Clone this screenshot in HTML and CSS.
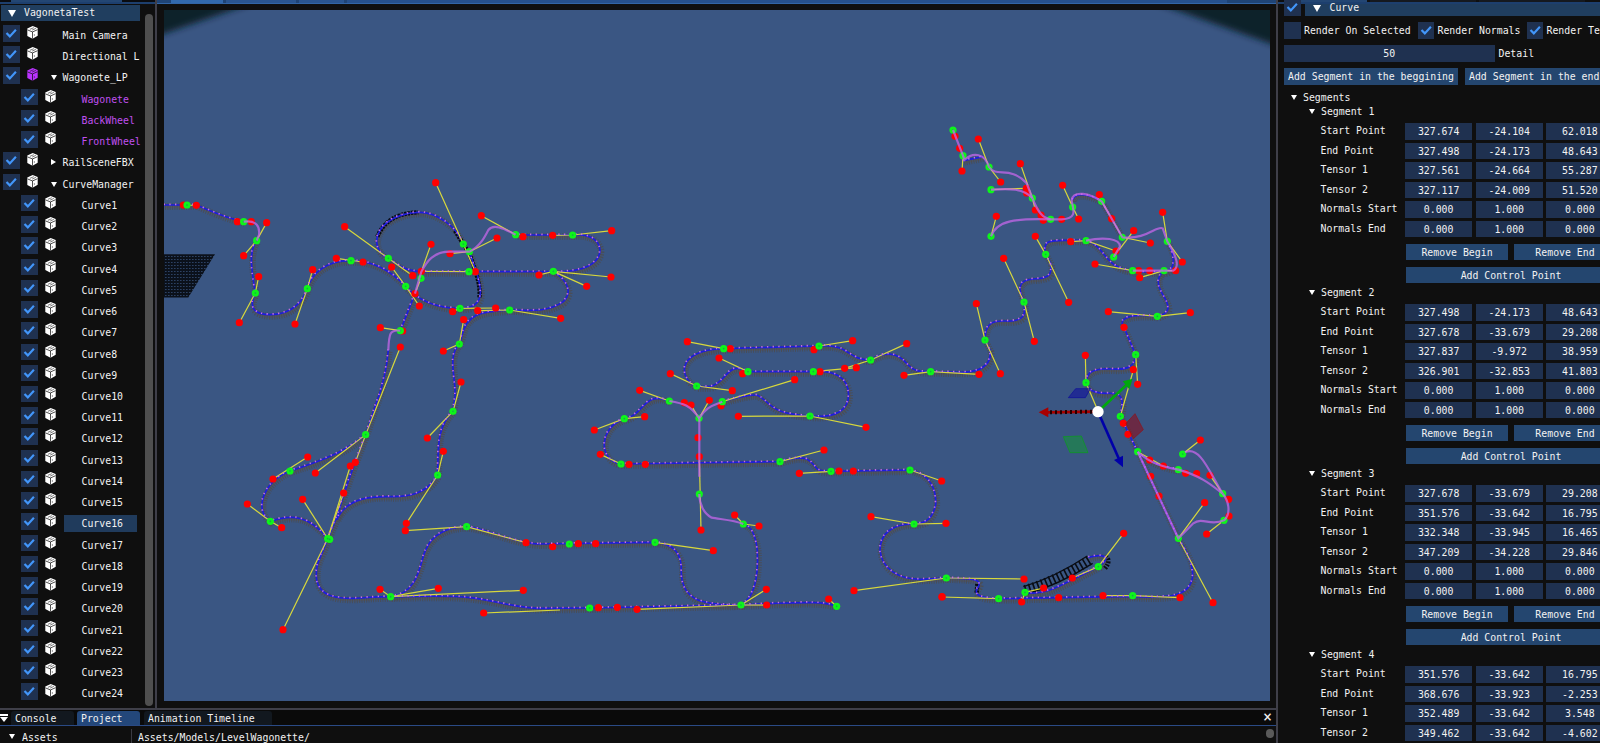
FILE: index.html
```
<!DOCTYPE html>
<html lang="en">
<head>
<meta charset="utf-8">
<title>VagonetaTest</title>
<link rel="stylesheet" href="styles.css">
</head>
<body>
<svg class="defs" width="0" height="0">
  <symbol id="check" viewBox="0 0 17 17"><path d="M3.6 8.2 L7 11.7 L13.3 4.9" fill="none" stroke="#4296fa" stroke-width="2.2"/></symbol>
  <symbol id="cube" viewBox="0 0 14 16">
    <path d="M7.2 1 L12.6 3.2 V11.6 L7 14.6 L1.4 11.8 V3.6 Z" fill="currentColor"/>
    <path d="M1.6 5.2 L7 7.4 L12.4 5 M7 7.4 V14.6" fill="none" stroke="#0f0f0f" stroke-width=".8"/>
    <path d="M4.2 4.6 L8.4 2.8 M6.6 5.4 L10.6 3.6" fill="none" stroke="#0f0f0f" stroke-width=".6"/>
    <path d="M9 10 V11.4" stroke="#0f0f0f" stroke-width=".7"/>
  </symbol>
</svg>
<div class="app">
  <div class="workspace">
    <div class="upper">
      <aside class="hierarchy">
        <div class="strip"><span class="strip-tab"></span></div>
        <div class="hier-body">
          <div class="hier-list">
            <div class="root"><i class="tri big"></i><span>VagonetaTest</span></div>
            <div id="tree"></div>
          </div>
          <div class="scrollbar"></div>
        </div>
      </aside>
      <main class="scene">
        <div class="scene-strip"><span></span><span></span><span></span><span></span></div>
        <svg class="view" width="1106" height="691" viewBox="164 10 1106 691">
          <defs>
            <pattern id="mesh" width="3" height="3" patternUnits="userSpaceOnUse"><rect width="3" height="3" fill="#0b111b"/><rect x="0" y="1" width="1.6" height="1" fill="#2c4163"/></pattern>
            <filter id="soft" x="-20%" y="-50%" width="140%" height="200%"><feGaussianBlur stdDeviation="3"/></filter>
          </defs>
          <rect x="164" y="10" width="1106" height="691" fill="#3a5683"/>
          <path d="M140 -10 H290 Q215 16 140 42 Z M1120 -10 Q1215 24 1300 54 V-10 Z" fill="#11232a" filter="url(#soft)"/>
          <g id="world"></g>
          <g transform="translate(850 360) scale(.33333)">
            <path d="M655 113 L677 86 H722 L706 113 Z" fill="#10109c" fill-opacity=".6" stroke="#0c0c9c" stroke-width="2"/>
            <path d="M855 161 L880 209 L850 236 L828 190 Z" fill="#8a0d1c" fill-opacity=".6" stroke="#8f1018" stroke-width="2"/>
            <path d="M640 230 L694 228 L714 278 L660 278 Z" fill="#0f9a30" fill-opacity=".5" stroke="#08a018" stroke-width="2"/>
            <path d="M744 155 L590 157" stroke="#a80000" stroke-width="8"/>
            <path d="M726 155 L598 157" stroke="#220000" stroke-width="12" stroke-dasharray="6 9"/>
            <path d="M566 157 L595 142 V172 Z" fill="#a80000"/>
            <path d="M744 155 L830 74" stroke="#00a80c" stroke-width="8"/>
            <path d="M848 56 L838 88 L818 64 Z" fill="#00a80c"/>
            <path d="M744 155 L806 295" stroke="#0000a8" stroke-width="8"/>
            <path d="M819 322 L792 300 L819 287 Z" fill="#0000a8"/>
            <circle cx="744" cy="155" r="17" fill="#fff"/>
          </g>
        </svg>
      </main>
    </div>
    <section class="bottom">
      <div class="tabs">
        <span class="menu"></span><span class="tab console">Console</span><span class="tab project">Project</span><span class="tab timeline">Animation Timeline</span><span class="close">×</span>
      </div>
      <div class="bottom-body">
        <span class="assets"><i class="tri"></i>Assets</span><span class="pathbar">Assets/Models/LevelWagonette/</span><span class="knob"></span>
      </div>
    </section>
  </div>
  <aside class="inspector">
    <div class="insp-strip"><span></span><span></span><span></span></div>
    <div class="comp-head"><svg class="box"><use href="#check"/></svg><div class="comp-bar"><i class="tri big"></i>Curve</div></div>
    <div class="opts"><svg class="box"></svg><span class="o1">Render On Selected</span><svg class="box"><use href="#check"/></svg><span class="o2">Render Normals</span><svg class="box"><use href="#check"/></svg><span>Render Te</span></div>
    <div class="detail"><span class="slider">50</span><span>Detail</span></div>
    <div class="adds"><span class="btn add1">Add Segment in the beggining</span><span class="btn add2">Add Segment in the end</span></div>
    <div class="segs-title"><i class="tri"></i>Segments</div>
    <div id="segments"></div>
  </aside>
</div>
<script src="main.js"></script>
</body>
</html>
```
FILE: styles.css
```
* { box-sizing: border-box; }
body { margin: 0; background: #0f0f0f; color: #f2f2f2; font: 9.85px/16px "DejaVu Sans Mono", "Liberation Mono", monospace; overflow: hidden; }
.defs { display: block; width: 0; height: 0; }
.app { display: flex; width: 1600px; height: 743px; overflow: hidden; white-space: nowrap; }
.workspace { width: 1276px; display: flex; flex-direction: column; }
.upper { display: flex; height: 708px; }
.hierarchy { width: 155px; }
.strip { height: 4px; background: #0a0c10; border-bottom: 2px solid #1d3f6e; padding-left: 11px; }
.strip-tab { display: block; width: 111px; height: 2px; background: #234673; }
.hier-body { display: flex; padding-top: 1px; }
.hier-list { width: 140px; margin-left: 1px; overflow: hidden; }
.root { display: flex; align-items: center; height: 16px; width: 139px; background: #203e5f; padding-left: 7px; margin-bottom: 4px; }
.root span { margin-left: 8px; }
.tri { flex: none; display: inline-block; width: 0; height: 0; border: 3px solid transparent; border-top: 5px solid #fff; border-bottom: 0; }
.tri.big { border-width: 7px 4px 0; }
.tri.right { border: 3px solid transparent; border-left: 5px solid #fff; border-right: 0; }
.tri.none { visibility: hidden; }
.node { display: flex; height: 21.24px; padding-left: 2px; }
.node.child { padding-left: 20px; }
.box { flex: none; display: block; width: 16.5px; height: 16.5px; background: #1f3150; }
.cube { flex: none; width: 13px; height: 15px; margin: 0 12px 0 6px; color: #fff; }
.node .tri { margin: 8px 6px 0 0; }
.node .tri.right { margin: 7px 7px 0 0; }
.purple { color: #c050f0; }
.cube.lit { color: #bb33ff; }
.label { flex: none; height: 16.5px; margin-top: 2px; line-height: 17px; }
.child .label { width: 73px; padding-left: 18px; }
.child .cube { margin-right: 7px; }
.selected { background: #203b5c; }
.scrollbar { width: 8px; height: 692px; margin: 9px 0 0 4px; border-radius: 4px; background: #4f4f4f; }
.scene { width: 1121px; border-left: 2px solid #3f3f49; }
.scene-strip { display: flex; height: 4px; background: #1f4476; border-bottom: 1px solid #3265a6; gap: 3px; padding-left: 14px; }
.scene-strip span { height: 3px; width: 52px; background: #3269ad; }
.scene-strip span + span { width: 70px; background: #2a5590; }
.scene-strip span + span + span { width: 45px; }
.scene-strip span:last-child { width: 880px; background: #26508c; }
.view { display: block; margin: 6px 0 0 7px; }
.bottom { height: 35px; border-top: 2px solid #3f3f49; background: #0f0f0f; }
.tabs { display: flex; height: 16px; border-bottom: 1px solid #2a4a85; background: #0a0a0a; padding-top: 1px; }
.menu { width: 8px; height: 8px; margin: 3px 3px 0 0; background: linear-gradient(#fff 2px, transparent 2px); position: relative; }
.menu::after { content: ""; position: absolute; left: 0; top: 3px; border: 4px solid transparent; border-top: 5px solid #fff; border-bottom: 0; }
.tab { height: 14px; border-radius: 3px 3px 0 0; background: #12181f; padding-left: 4px; line-height: 15px; }
.console { width: 63px; margin-right: 3px; }
.project { width: 63px; margin-right: 4px; background: #23477a; }
.timeline { width: 128px; }
.close { margin-left: auto; margin-right: 4px; font-size: 15px; line-height: 13px; }
.bottom-body { display: flex; padding-top: 3px; height: 17px; line-height: 18px; overflow: hidden; }
.assets { width: 131px; padding-left: 9px; height: 18px; }
.assets .tri { margin: 0 7px 2px 0; }
.pathbar { border-left: 1px solid #3a3a42; padding-left: 6px; }
.knob { width: 8px; height: 9px; border-radius: 4px; background: #5a5a5a; margin: 0 2px 0 auto; }
.inspector { width: 324px; height: 743px; overflow: hidden; border-left: 2px solid #3f3f49; flex: none; }
.insp-strip { display: flex; gap: 3px; height: 4px; border-bottom: 2px solid #1d3f6e; padding-left: 14px; }
.insp-strip span { width: 75px; height: 2px; background: #234673; }
.insp-strip span + span { width: 106px; background: #15191f; }
.comp-head { display: flex; height: 18px; }
.comp-head .box { margin: -5px 0 0 6px; }
.comp-bar { flex: 1; height: 12px; margin-left: 4px; background: #203e5f; display: flex; align-items: center; padding: 0 0 4px 8px; gap: 9px; }
.opts { display: flex; height: 23px; padding-left: 6px; line-height: 17px; }
.opts .box + span { margin-left: 3.5px; }
.o1 { width: 113.5px; }
.o2 { width: 89px; }
.opts span, .adds span { flex: none; }
.detail { display: flex; height: 23px; padding-left: 6px; gap: 4px; line-height: 17px; }
.slider { width: 210.5px; height: 16.5px; background: #1f3150; text-align: center; line-height: 17px; }
.btn { display: block; height: 16.5px; background: #24466f; text-align: center; line-height: 17px; }
.adds { display: flex; gap: 7px; padding-left: 6px; height: 21px; }
.add1 { width: 174px; }
.add2 { width: 140px; text-align: left; padding-left: 4px; }
.segs-title { height: 15px; padding-left: 12px; line-height: 17px; }
.segs-title .tri, .seg-title .tri { margin: 0 6px 1px 1px; }
.segment { height: 181px; padding-left: 30px; }
.seg-title { height: 19px; line-height: 16px; }
.row { display: flex; height: 19.55px; width: 400px; padding-left: 12.5px; gap: 3.3px; }
.name { width: 81.2px; line-height: 16px; }
.num { width: 67.3px; height: 16.6px; background: #1f3150; text-align: center; line-height: 17.5px; }
.pair { display: flex; width: 210px; gap: 6px; margin: 3.7px 0 6.5px 98px; }
.pair .btn { width: 102px; }
.wide { width: 210px; margin-left: 98px; }
.ties { fill: none; stroke: #4b4c50; stroke-width: 20; stroke-dasharray: 3 4; opacity: .85; }
.gap { fill: none; stroke: #4a5468; stroke-width: 9; }
.rail { fill: none; stroke: #1d1ddd; stroke-width: 5; }
.norm { fill: none; stroke: #c470e0; stroke-width: 5; stroke-dasharray: 4 13; }
.hot { fill: none; stroke: #c567ea; stroke-width: 6.5; }
.dark { fill: none; stroke: #070a12; stroke-width: 13; stroke-dasharray: 7 3; }
.tensor { fill: none; stroke: #d8d83c; stroke-width: 3.6; }
.ctl { fill: #f00; }
.pt { fill: #0df51a; }
.speck { fill: #17a64b; }
```
FILE: main.js
```
// ---- hierarchy ----
const nodes = [
  ['Main Camera'], ['Directional L'], ['Wagonete_LP', 'open', 'lit'],
  ['Wagonete', 'child', 'purple'], ['BackWheel', 'child', 'purple'], ['FrontWheel', 'child', 'purple'],
  ['RailSceneFBX', 'right'], ['CurveManager', 'open']
];
for (let i = 1; i <= 24; i++) nodes.push(['Curve' + i, 'child', i === 16 ? 'selected' : '']);
document.getElementById('tree').innerHTML = nodes.map(([t, k = '', c = '']) => {
  const child = k === 'child';
  const tri = child ? '' : `<i class="tri ${k === 'open' ? '' : k === 'right' ? 'right' : 'none'}"></i>`;
  return `<div class="node ${child ? 'child' : ''}"><svg class="box"><use href="#check"/></svg>` +
    `<svg class="cube ${c === 'lit' ? 'lit' : ''}"><use href="#cube"/></svg>${tri}<span class="label ${c === 'lit' ? '' : c}">${t}</span></div>`;
}).join('');

// ---- curve segments ----
const names = ['Start Point', 'End Point', 'Tensor 1', 'Tensor 2', 'Normals Start', 'Normals End'];
const normal = ['0.000', '1.000', '0.000'];
const segments = [
  ['327.674 -24.104 62.018', '327.498 -24.173 48.643', '327.561 -24.664 55.287', '327.117 -24.009 51.520'],
  ['327.498 -24.173 48.643', '327.678 -33.679 29.208', '327.837 -9.972 38.959', '326.901 -32.853 41.803'],
  ['327.678 -33.679 29.208', '351.576 -33.642 16.795', '332.348 -33.945 16.465', '347.209 -34.228 29.846'],
  ['351.576 -33.642 16.795', '368.676 -33.923 -2.253', '352.489 -33.642 3.548', '349.462 -33.642 -4.602']
];
document.getElementById('segments').innerHTML = segments.map((s, i) =>
  `<div class="segment"><div class="seg-title"><i class="tri"></i>Segment ${i + 1}</div>` +
  (i === 3 ? names.slice(0, 4) : names).map((n, j) =>
    `<div class="row"><span class="name">${n}</span>${(s[j] ? s[j].split(' ') : normal).map(v => `<span class="num">${v}</span>`).join('')}</div>`).join('') +
  (i === 3 ? '' : '<div class="pair"><span class="btn">Remove Begin</span><span class="btn">Remove End</span></div><div class="btn wide">Add Control Point</div>') +
  '</div>').join('');

// ---- scene: each area is in thirds of a pixel from its origin ----
const areas = [
  { at: [160, 170],
    rails: ['M12 105 H109 C150 122 200 145 251 155', 'M290 212 C265 245 275 300 286 369 C262 420 290 433 330 434 C400 434 430 390 442 356 C455 310 500 270 573 272 C650 272 700 310 737 349 C770 390 830 415 900 415 C960 415 965 380 960 350 C955 310 935 270 928 245',
      'M910 222 C890 170 830 125 775 127 C700 130 650 170 650 215 C652 245 670 258 685 265 C720 290 740 303 784 305 H1180 C1270 308 1320 280 1320 240 C1318 205 1280 190 1238 195 H1067',
      'M765 371 L721 482', 'M1180 304 C1220 330 1240 365 1210 395 C1160 430 1100 420 1049 420 C960 425 920 430 905 500 L898 522'],
    hot: ['M251 155 C290 150 300 170 297 195 L290 212', 'M1067 194 C1030 175 1000 160 985 180 C975 200 960 230 928 245 H870 C820 245 800 275 784 305 L765 371', 'M721 482 C690 478 687 490 685 540'],
    dark: ['M652 200 C670 160 700 130 775 127', 'M885 182 L910 222 L928 250 C945 300 963 340 958 385'],
    pts: '81,105 251,155 290,212 286,369 442,356 573,272 737,349 685,265 783,325 910,222 928,245 927,305 900,415 1049,420 1180,304 1067,194 1238,195 721,482 898,522',
    ctl: '70,105 109,106 232,155 274,155 320,158 251,257 296,320 238,458 405,462 458,299 529,265 609,276 695,291 554,170 758,317 784,304 813,223 870,251 765,371 778,408 827,38 1011,204 964,137 1089,200 1178,196 1355,182 1353,321 1280,349 1137,315 946,305 878,425 1007,414 953,422 1202,445 661,473 728,483 721,531 911,449 850,543',
    lines: '70,105 109,106|232,155 274,155|320,158 290,212 251,257|296,320 286,369 238,458|405,462 442,356 458,299|529,265 609,276|695,291 737,349 778,408|554,170 685,265 758,317|784,304 813,223|783,325 765,371|870,251 928,245 1011,204|827,38 910,222 946,305|784,304 927,305|964,137 1067,194|1178,196 1238,195 1355,182|1353,321 1180,304 1280,349|1137,315 1180,304|878,425 900,415 1007,414|953,422 1049,420 1202,445|661,473 721,482|911,449 898,522 850,543' },
  { at: [160, 330],
    rails: ['M685 60 C680 120 665 180 645 230 L617 314 C600 360 555 470 535 550 L503 626 C480 690 465 700 470 750 C480 800 530 805 580 805 C620 803 660 800 692 800 C780 790 780 690 797 660 C815 615 860 590 920 590 C980 595 1060 640 1140 642',
      'M898 42 C860 80 890 150 885 200 L879 244 C830 290 835 350 833 435 C800 495 740 500 700 500 C640 498 560 500 530 570', 'M617 314 C560 360 520 380 390 423 C310 455 280 540 331 574 C400 550 450 560 503 626', 'M692 800 C780 800 860 795 930 803 C1010 812 1070 835 1140 835'],
    pts: '617,314 390,423 331,574 503,626 509,628 879,244 833,435 920,590 692,800',
    ctl: '443,381 466,429 339,447 262,522 365,593 428,508 551,489 586,397 571,408 903,156 802,324 850,364 739,580 736,602 1098,638 1178,650 660,778 835,775 1090,781 971,849 369,899',
    lines: '443,381 339,447|466,429 617,314 721,51|617,314 586,397|571,408 503,626 369,899|428,508 503,626|551,489 503,626|262,522 331,574 365,593|903,156 879,244 802,324|850,364 833,435 739,580|736,602 920,590 1098,638|660,778 692,800 835,775|692,800 1090,781|971,849 1200,840' },
  { at: [540, 330],
    rails: ['M0 642 L345 637 C400 640 428 670 424 730 C428 810 480 825 603 825 C650 800 655 720 652 660 C645 600 625 585 610 582', 'M547 215 C600 200 640 190 655 197 C700 225 690 250 810 258 C890 265 925 240 926 195 C925 140 880 120 820 125 H624 C560 90 560 160 510 170 H470 C420 150 400 60 551 56 L837 48 C930 40 920 90 992 90 C1030 65 1070 65 1100 100 C1120 125 1140 125 1172 125',
      'M388 213 C310 180 310 260 253 266 C180 290 170 390 243 402 L720 395 C800 370 810 390 830 415 C840 425 855 424 873 424 L1110 420 C1170 430 1190 480 1187 525 C1175 575 1150 580 1122 582 C1060 580 1020 610 1020 660 C1025 720 1080 748 1140 748 L1219 744', 'M0 835 L149 834 L603 825 L700 820 C800 817 850 815 888 828'],
    hot: ['M610 582 C580 570 540 568 515 563 C490 550 478 520 478 492', 'M478 440 V265 C500 225 530 225 547 215', 'M478 265 C450 225 430 220 388 213'],
    pts: '551,56 837,48 992,90 1172,125 624,125 820,125 470,168 388,213 547,215 477,265 253,266 810,258 243,402 720,395 873,424 1110,420 478,492 1122,582 610,582 88,642 345,637 149,834 603,825 890,829 1219,744',
    ctl: '442,35 571,56 822,59 938,32 1100,41 537,84 391,131 608,131 840,125 914,115 949,113 1092,136 577,182 764,149 299,181 433,218 453,225 508,211 543,227 314,260 163,300 595,259 978,292 474,323 478,380 181,373 267,403 316,403 852,360 778,430 897,423 940,423 1205,453 993,560 1218,580 584,555 657,588 483,600 115,641 167,641 520,662 175,833 232,832 291,838 679,778 680,825 866,807 942,782 1206,800',
    lines: '442,35 551,56|837,48 938,32|1100,41 992,90 914,115|820,125 949,113|537,84 624,125|391,131 470,168 577,182|547,215 764,149|299,181 388,213|453,225 477,265 508,211|314,260 253,266 163,300|595,259 810,258 978,292|181,373 243,402|720,395 852,360|778,430 873,424|1110,420 1205,453|993,560 1122,582 1218,580|584,555 610,582 657,588|478,380 483,600|345,637 520,662|291,838 603,825 679,778|603,825 680,825|866,807 890,829|942,782 1219,744|1092,136 1172,125' },
  { at: [930, 110],
    rails: ['M2 785 L100 787 C170 785 185 750 180 720 L165 690 C165 620 210 635 245 633 C290 628 285 605 282 576 C265 540 260 510 310 507 C365 505 365 490 362 460 L347 433 C335 385 370 392 422 391 H468 C530 410 520 475 608 482', 'M702 482 C670 510 690 540 705 565 C725 600 710 612 682 619 C610 612 560 620 582 652 L617 734 C615 790 560 775 520 777 C470 780 472 800 468 818', 'M99 152 L160 140', 'M428 270 C430 245 480 252 515 274 L577 382', 'M712 394 C740 450 735 482 702 486 H608'],
    hot: ['M69 60 L99 137 L103 150 C130 125 165 130 177 171 C200 205 240 165 290 220 L307 264 C325 310 340 325 362 328 H395 C450 325 425 290 425 270 C430 240 480 250 515 274 L577 382 C650 390 680 345 698 355 L712 394 C740 440 750 470 730 482 H608', 'M183 239 C240 235 280 235 307 264', 'M183 379 C200 330 260 325 362 328', 'M468 392 C520 380 570 385 570 410 L551 441'],
    pts: '69,60 99,137 177,171 183,239 307,264 183,379 362,328 428,291 515,274 577,382 712,394 551,441 468,392 347,433 608,482 702,482 282,576 682,619 165,690 617,734',
    ctl: '75,79 89,115 145,87 96,183 212,216 271,161 289,235 290,249 316,300 333,315 340,331 395,328 199,319 398,226 446,327 508,254 545,326 611,362 661,399 698,307 757,456 737,482 558,423 422,395 316,379 221,445 495,462 626,482 659,482 629,503 416,577 535,605 781,608 139,581 313,694 582,652 466,736 147,793 211,791 610,779',
    lines: '99,137 96,183|145,87 177,171 212,216|271,161 307,264 316,300|183,239 289,235|199,319 183,379|398,226 428,291 446,327|515,274 577,382 661,399|551,441 611,362|698,307 712,394 757,456|422,395 468,392 558,423|316,379 347,433 416,577|221,445 282,576 313,694|495,462 608,482|629,503 702,482 737,482|535,605 682,619 781,608|139,581 165,690 211,791|617,734 623,823|466,736 468,818|3,785 147,793' },
  { at: [850, 360],
    rails: ['M289 654 C380 655 395 660 385 680 C370 700 380 715 446 716 L848 709 C960 715 1020 710 1028 650 C1030 600 1000 560 985 535 L863 275 L811 169 C830 100 800 98 770 100 C730 100 715 90 708 68', 'M525 697 C590 710 640 670 745 620 C790 590 760 580 715 592', 'M863 275 C900 310 940 320 985 329'],
    hot: ['M863 275 C900 310 940 320 985 329 C1060 350 1090 380 1118 401 C1080 340 1050 255 1005 277', 'M1118 401 C1135 420 1145 460 1122 481 C1080 500 1060 470 1030 490 L985 535 L863 275'],
    dark: ['M380 698 L382 672'],
    pts: '708,68 811,169 863,275 985,329 998,282 1118,401 1122,481 985,535 446,716 525,697 745,620 848,707',
    ctl: '863,73 820,190 834,223 899,300 940,318 1007,340 1040,341 1080,346 1051,240 1136,418 1137,468 1070,522 1064,428 902,349 927,408 1089,728 821,520 667,654 522,657 581,684 515,726 626,713 759,707 990,713',
    lines: '708,68 745,155|811,169 850,30|863,275 940,318|998,282 1051,240|1118,401 1080,346|1122,481 1070,522|1064,428 985,535 1089,728|821,520 745,620 667,654|581,684 525,697 515,726|289,654 522,657|276,711 446,716|759,707 848,707 990,713' }
];
const layer = fn => areas.map(a => `<g transform="translate(${a.at}) scale(.33333)">${fn(a)}</g>`).join('');
const draw = (cls, list = [], t = '') => list.map(d => `<path class="${cls}" d="${d}" ${t}/>`).join('');
const dots = (cls, s, r) => s.split(' ').map(p => { const [x, y] = p.split(','); return `<circle class="${cls}" cx="${x}" cy="${y}" r="${r}"/>`; }).join('');
document.getElementById('world').innerHTML =
  '<path d="M164 254.3 H215 L188.3 297.6 H164 Z" fill="url(#mesh)"/>' +
  layer(a => draw('gap', a.rails, 'transform="translate(3 5)"') + draw('ties', a.rails, 'transform="translate(3 5)"')) +
  layer(a => draw('dark', a.dark)) +
  '<g transform="translate(850 360) scale(.33333)"><path d="M525 690 Q620 662 720 600" fill="none" stroke="#0a0d14" stroke-width="30" stroke-dasharray="5 8"/><path d="M520 680 Q615 652 712 588 M530 702 Q625 675 728 610" fill="none" stroke="#0a0d14" stroke-width="4"/><path d="M765 625 Q785 600 765 588" fill="none" stroke="#0a0d14" stroke-width="14" stroke-dasharray="5 4"/></g>' +
  layer(a => draw('rail', a.rails) + draw('tensor', a.lines.split('|').map(l => 'M' + l))) +
  layer(a => draw('norm', a.rails, 'transform="translate(-1 -2)"') + dots('ctl', a.ctl, 10.8)) +
  layer(a => dots('pt', a.pts, 10.8) + dots('speck', a.pts, 2.5) + draw('hot', a.hot, 'opacity=".75"')) +
  '<g transform="translate(850 360) scale(.33333)">' + dots('ctl', '276,711', 10.8) + '</g>';
```
